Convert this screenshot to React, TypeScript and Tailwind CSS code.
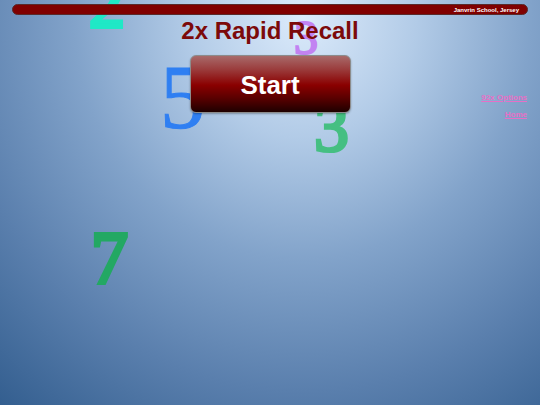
const digits = [
  { ch: '2', className: 'left-[89px] top-[-33px] text-[72px] text-[#1fe8c6] [-webkit-text-stroke:4px_#1fe8c6]' },
  { ch: '3', className: 'left-[294px] top-[14px] text-[48px] text-[#c283f2] [-webkit-text-stroke:2px_#c283f2]' },
  { ch: '5', className: 'left-[160px] top-[53px] text-[90px] text-[#2f7ff2] [-webkit-text-stroke:1px_#2f7ff2]' },
  { ch: '3', className: 'left-[314px] top-[93px] text-[70px] text-[#45bf82] [-webkit-text-stroke:3px_#45bf82]' },
  { ch: '7', className: 'left-[91px] top-[221px] text-[74px] text-[#23a863] [-webkit-text-stroke:4px_#23a863]' },
]

export default function App() {
  return (
    <div
      className="relative w-[540px] h-[405px] overflow-hidden bg-[radial-gradient(ellipse_88%_125%_at_56%_4%,#dcebfb_0%,#b2cbe7_24%,#82a3ca_48%,#5a7fad_74%,#335e8f_100%)]"
      style={{ fontFamily: '"Liberation Sans", Arial, sans-serif' }}
    >
      {/* floating numbers */}
      {digits.map((d, i) => (
        <div
          key={i}
          className={`absolute leading-none select-none ${d.className}`}
          style={{ fontFamily: '"Liberation Serif", "Times New Roman", serif' }}
        >
          {d.ch}
        </div>
      ))}

      <div className="relative z-10">
        {/* header bar */}
        <div className="mx-[12px] mt-[4px] h-[11px] rounded-full bg-[#800000] border border-[#5a2a2a] flex items-center justify-end pr-[8px]">
          <span className="text-[6px] font-bold text-white leading-none">Janvrin School, Jersey</span>
        </div>

        <h1 className="mt-[4px] text-center text-[24px] font-bold leading-none text-[#7c0a0a]">
          2x Rapid Recall
        </h1>

        <div className="mt-[12px] grid grid-cols-[1fr_auto_1fr]">
          <div />
          <button className="w-[161px] h-[58px] rounded-[6px] border border-[#8c8c8c] bg-[linear-gradient(to_bottom,#a86a6a_0%,#9a3a3a_25%,#8a0000_52%,#5a0000_75%,#1e0000_100%)] shadow-[0_1px_2px_rgba(0,0,0,0.3)] text-white text-[26px] font-bold leading-none pt-[2px]">
            Start
          </button>
          <div className="flex flex-col items-end pr-[13px] pt-[34px] text-[8px] font-bold leading-[17px] text-[#e76fc6]">
            <a href="#" className="underline">92x Options</a>
            <a href="#" className="underline">Home</a>
          </div>
        </div>
      </div>
    </div>
  )
}
